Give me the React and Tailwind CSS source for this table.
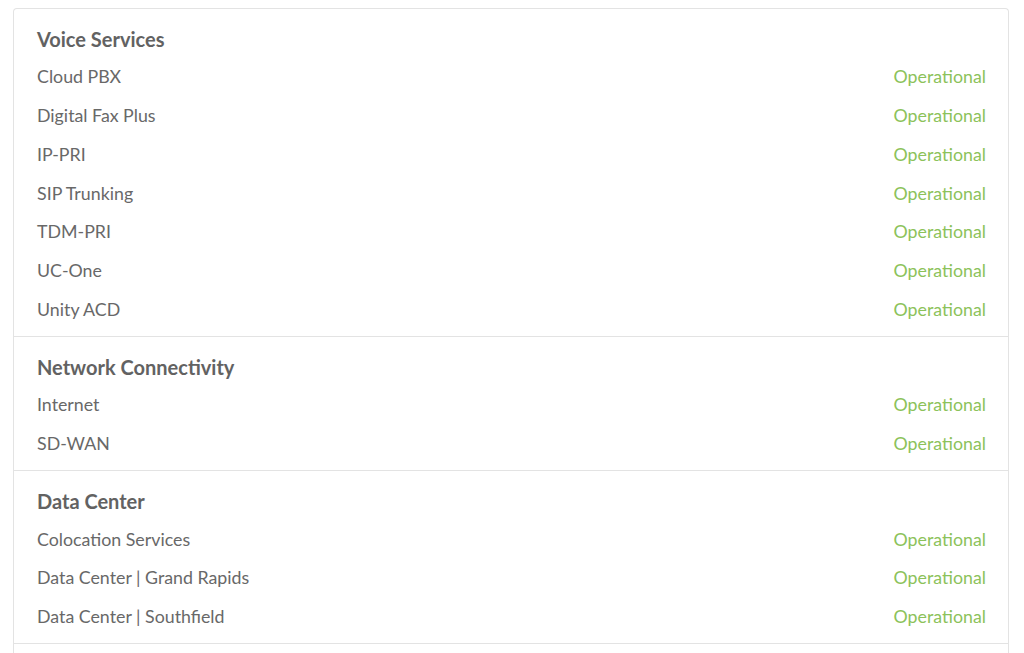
const sections = [
  {
    name: "Voice Services",
    items: ["Cloud PBX", "Digital Fax Plus", "IP-PRI", "SIP Trunking", "TDM-PRI", "UC-One", "Unity ACD"],
  },
  {
    name: "Network Connectivity",
    items: ["Internet", "SD-WAN"],
  },
  {
    name: "Data Center",
    items: ["Colocation Services", "Data Center | Grand Rapids", "Data Center | Southfield"],
  },
];

function Section({ name, items }) {
  return (
    <div className="border-b border-[#e3e3e3] pl-[23px] pr-[22px] pt-[12px] pb-[7.5px]">
      <div className="h-[36px] flex items-center text-[20px] font-bold text-[#626262]">{name}</div>
      {items.map((item) => (
        <div key={item} className="h-[38.83px] flex items-center justify-between text-[17.8px]">
          <span className="text-[#686868]">{item}</span>
          <span className="text-[#8cc25a]">Operational</span>
        </div>
      ))}
    </div>
  );
}

export default function App() {
  return (
    <div className="h-[653px] overflow-hidden bg-white pl-[13px] pr-[15px] pt-[8px] font-['Lato',sans-serif]">
      <div className="rounded-t border-x border-t border-[#e3e3e3]">
        {sections.map((s) => (
          <Section key={s.name} {...s} />
        ))}
        <div className="h-10" />
      </div>
    </div>
  );
}
